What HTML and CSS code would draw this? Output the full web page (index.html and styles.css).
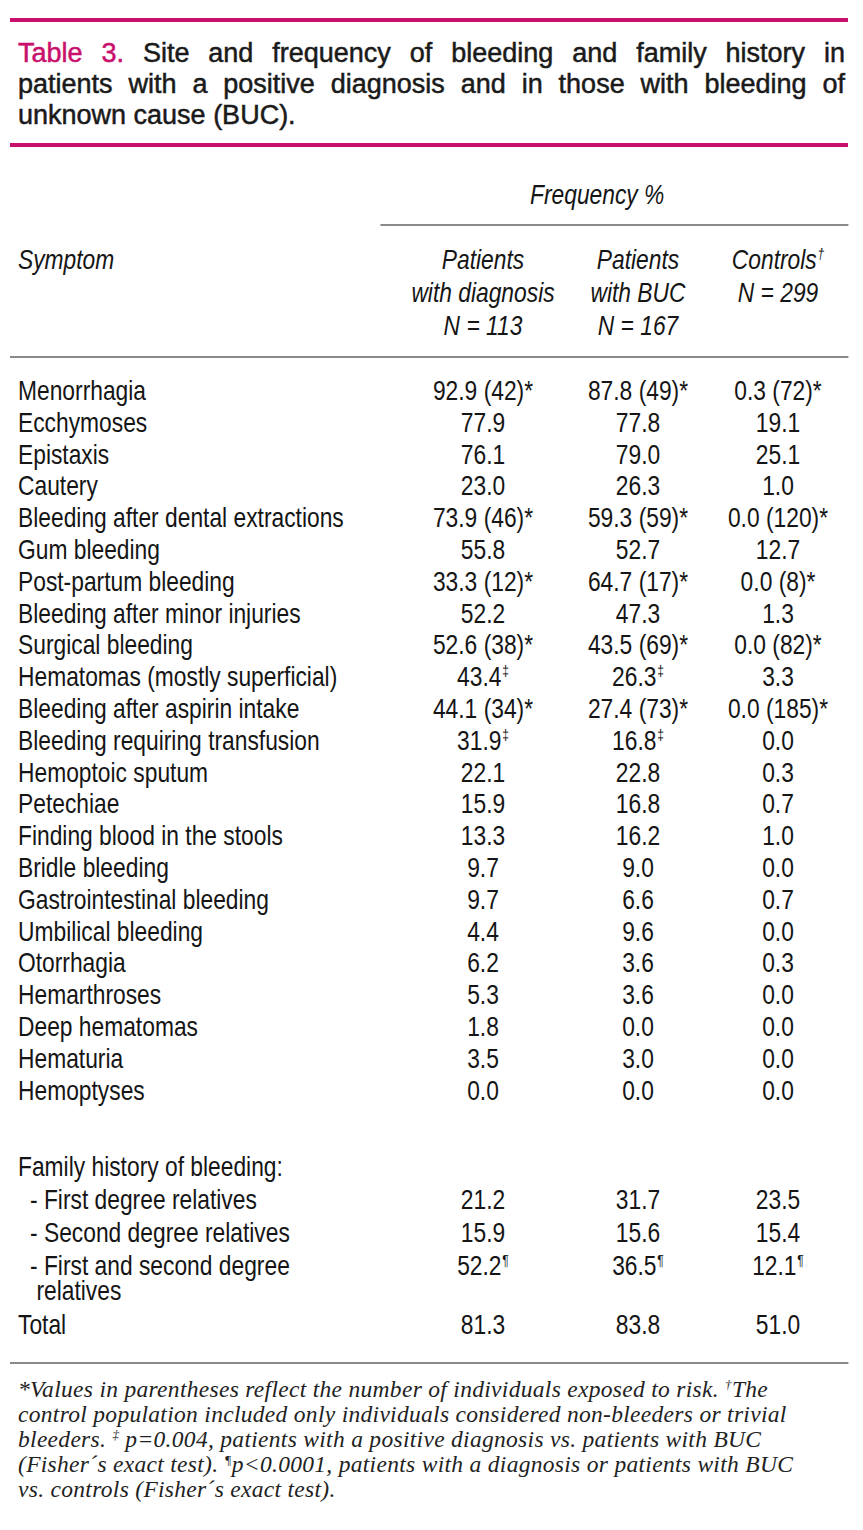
FILE: index.html
```html
<!DOCTYPE html>
<html>
<head>
<meta charset="utf-8">
<link rel="stylesheet" href="styles.css">
</head>
<body>
<main class="sheet">
  <div class="rule-pink"></div>
  <div class="title">
    <span class="tl"><span class="tnum">Table 3.</span> Site and frequency of bleeding and family history in</span>
    <span class="tl">patients with a positive diagnosis and in those with bleeding of</span>
    <span class="tl last">unknown cause (BUC).</span>
  </div>
  <div class="rule-pink rule-pink-2"></div>

  <div class="condensed">
    <div class="freq-head"><span class="freq-label">Frequency %</span></div>

    <div class="row head-row">
      <span class="sym">Symptom</span>
      <span class="v">Patients<br>with diagnosis<br>N = 113</span>
      <span class="v">Patients<br>with BUC<br>N = 167</span>
      <span class="v">Controls<sup class="mark">†</sup><br>N = 299</span>
    </div>
    <div class="rule rule-gray rule-head"></div>

    <div class="tbody">
      <div class="row"><span class="sym">Menorrhagia</span><span class="v">92.9 (42)*</span><span class="v">87.8 (49)*</span><span class="v">0.3 (72)*</span></div>
      <div class="row"><span class="sym">Ecchymoses</span><span class="v">77.9</span><span class="v">77.8</span><span class="v">19.1</span></div>
      <div class="row"><span class="sym">Epistaxis</span><span class="v">76.1</span><span class="v">79.0</span><span class="v">25.1</span></div>
      <div class="row"><span class="sym">Cautery</span><span class="v">23.0</span><span class="v">26.3</span><span class="v">1.0</span></div>
      <div class="row"><span class="sym">Bleeding after dental extractions</span><span class="v">73.9 (46)*</span><span class="v">59.3 (59)*</span><span class="v">0.0 (120)*</span></div>
      <div class="row"><span class="sym">Gum bleeding</span><span class="v">55.8</span><span class="v">52.7</span><span class="v">12.7</span></div>
      <div class="row"><span class="sym">Post-partum bleeding</span><span class="v">33.3 (12)*</span><span class="v">64.7 (17)*</span><span class="v">0.0 (8)*</span></div>
      <div class="row"><span class="sym">Bleeding after minor injuries</span><span class="v">52.2</span><span class="v">47.3</span><span class="v">1.3</span></div>
      <div class="row"><span class="sym">Surgical bleeding</span><span class="v">52.6 (38)*</span><span class="v">43.5 (69)*</span><span class="v">0.0 (82)*</span></div>
      <div class="row"><span class="sym">Hematomas (mostly superficial)</span><span class="v">43.4<sup class="mark">‡</sup></span><span class="v">26.3<sup class="mark">‡</sup></span><span class="v">3.3</span></div>
      <div class="row"><span class="sym">Bleeding after aspirin intake</span><span class="v">44.1 (34)*</span><span class="v">27.4 (73)*</span><span class="v">0.0 (185)*</span></div>
      <div class="row"><span class="sym">Bleeding requiring transfusion</span><span class="v">31.9<sup class="mark">‡</sup></span><span class="v">16.8<sup class="mark">‡</sup></span><span class="v">0.0</span></div>
      <div class="row"><span class="sym">Hemoptoic sputum</span><span class="v">22.1</span><span class="v">22.8</span><span class="v">0.3</span></div>
      <div class="row"><span class="sym">Petechiae</span><span class="v">15.9</span><span class="v">16.8</span><span class="v">0.7</span></div>
      <div class="row"><span class="sym">Finding blood in the stools</span><span class="v">13.3</span><span class="v">16.2</span><span class="v">1.0</span></div>
      <div class="row"><span class="sym">Bridle bleeding</span><span class="v">9.7</span><span class="v">9.0</span><span class="v">0.0</span></div>
      <div class="row"><span class="sym">Gastrointestinal bleeding</span><span class="v">9.7</span><span class="v">6.6</span><span class="v">0.7</span></div>
      <div class="row"><span class="sym">Umbilical bleeding</span><span class="v">4.4</span><span class="v">9.6</span><span class="v">0.0</span></div>
      <div class="row"><span class="sym">Otorrhagia</span><span class="v">6.2</span><span class="v">3.6</span><span class="v">0.3</span></div>
      <div class="row"><span class="sym">Hemarthroses</span><span class="v">5.3</span><span class="v">3.6</span><span class="v">0.0</span></div>
      <div class="row"><span class="sym">Deep hematomas</span><span class="v">1.8</span><span class="v">0.0</span><span class="v">0.0</span></div>
      <div class="row"><span class="sym">Hematuria</span><span class="v">3.5</span><span class="v">3.0</span><span class="v">0.0</span></div>
      <div class="row"><span class="sym">Hemoptyses</span><span class="v">0.0</span><span class="v">0.0</span><span class="v">0.0</span></div>
    </div>

    <div class="family">
      <div class="row frow"><span class="sym">Family history of bleeding:</span><span class="v"></span><span class="v"></span><span class="v"></span></div>
      <div class="row frow"><span class="sym sub">- First degree relatives</span><span class="v">21.2</span><span class="v">31.7</span><span class="v">23.5</span></div>
      <div class="row frow"><span class="sym sub">- Second degree relatives</span><span class="v">15.9</span><span class="v">15.6</span><span class="v">15.4</span></div>
      <div class="row frow"><span class="sym sub wrap">- First and second degree<br><span class="cont">relatives</span></span><span class="v">52.2<sup class="mark">¶</sup></span><span class="v">36.5<sup class="mark">¶</sup></span><span class="v">12.1<sup class="mark">¶</sup></span></div>
      <div class="row frow total"><span class="sym">Total</span><span class="v">81.3</span><span class="v">83.8</span><span class="v">51.0</span></div>
    </div>
    <div class="rule rule-gray rule-foot"></div>
  </div>

  <p class="notes">*Values in parentheses reflect the number of individuals exposed to risk. <sup class="nmark">†</sup>The<br>control population included only individuals considered non-bleeders or trivial<br>bleeders. <sup class="nmark">‡</sup> p=0.004, patients with a positive diagnosis vs. patients with BUC<br>(Fisher´s exact test). <sup class="nmark">¶</sup>p&lt;0.0001, patients with a diagnosis or patients with BUC<br>vs. controls (Fisher´s exact test).</p>
</main>
</body>
</html>
```

FILE: styles.css
```css
html, body {
  margin: 0;
  padding: 0;
  background: #ffffff;
}

.sheet {
  width: 838px;
  margin-left: 10px;
  color: #151515;
  font-family: "Liberation Sans", Arial, sans-serif;
}

.rule-pink {
  width: 838px;
  height: 4px;
  background: #c8106c;
  margin-top: 18px;
}

.rule-pink-2 {
  margin-top: 12px;
}

.title {
  margin-top: 16px;
  padding: 0 3px 0 8px;
  font-size: 27px;
  line-height: 31px;
  color: #1a1a1a;
  -webkit-text-stroke: 0.5px #1a1a1a;
}

.tl {
  display: block;
  text-align: justify;
  text-align-last: justify;
}

.tl.last {
  text-align-last: left;
}

.tnum {
  color: #c8106c;
  -webkit-text-stroke: 0.5px #c8106c;
}

/* Narrow sans emulation: layout is authored at 1/0.8 width, then squeezed */
.condensed {
  width: 1047.5px;
  transform: scaleX(0.8);
  transform-origin: left top;
  font-size: 28.5px;
}

.rule {
  width: 1047.5px;
}

.rule-gray {
  height: 2px;
  background: #8a8a8a;
}

.freq-head {
  margin-top: 32px;
  margin-left: 462.5px;
  padding-right: 42px;
  text-align: center;
  line-height: 31px;
  font-style: italic;
  padding-bottom: 14px;
  border-bottom: 2px solid #8a8a8a;
}

.row {
  display: grid;
  grid-template-columns: 497.5px 187.5px 200px 150px;
  line-height: 31.8px;
}

.sym {
  padding-left: 10px;
  white-space: nowrap;
}

.v {
  text-align: center;
  white-space: nowrap;
}

.head-row {
  margin-top: 17px;
  line-height: 33px;
  font-style: italic;
}

.rule-head {
  margin-top: 14px;
}

.tbody {
  margin-top: 17px;
}

.mark {
  font-size: 15px;
  line-height: 0;
  vertical-align: 10px;
  margin-left: 1px;
}

.family {
  margin-top: 44px;
}

.frow {
  line-height: 33px;
}

.sub {
  padding-left: 25px;
}

.wrap {
  line-height: 25px;
  padding-top: 4px;
}

.cont {
  padding-left: 8px;
}

.total {
  margin-top: 5px;
}

.rule-foot {
  margin-top: 21px;
}

.notes {
  margin: 13px 0 0 0;
  padding-left: 8px;
  font-family: "Liberation Serif", "DejaVu Serif", serif;
  font-style: italic;
  font-size: 23.5px;
  letter-spacing: 0.3px;
  line-height: 25px;
  color: #222222;
}

.nmark {
  font-size: 13px;
  line-height: 0;
  vertical-align: 8px;
}
```
